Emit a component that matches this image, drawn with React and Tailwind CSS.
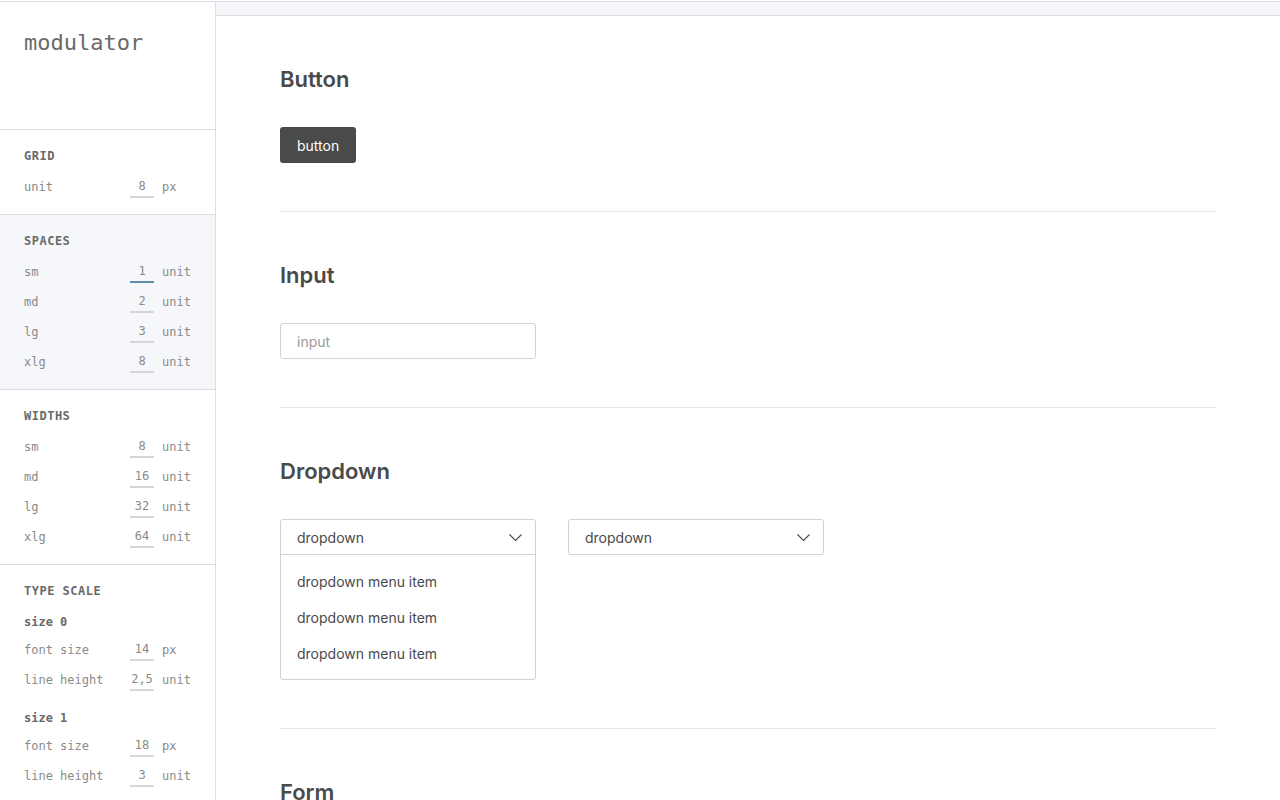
import React, { useState } from 'react';

const mono = { fontFamily: '"DejaVu Sans Mono", "Liberation Mono", monospace' };

const grid = [{ label: 'unit', value: '8', unit: 'px' }];

const spaces = [
  { label: 'sm', value: '1', unit: 'unit', active: true },
  { label: 'md', value: '2', unit: 'unit' },
  { label: 'lg', value: '3', unit: 'unit' },
  { label: 'xlg', value: '8', unit: 'unit' },
];

const widths = [
  { label: 'sm', value: '8', unit: 'unit' },
  { label: 'md', value: '16', unit: 'unit' },
  { label: 'lg', value: '32', unit: 'unit' },
  { label: 'xlg', value: '64', unit: 'unit' },
];

const typeScale = [
  {
    name: 'size 0',
    rows: [
      { label: 'font size', value: '14', unit: 'px' },
      { label: 'line height', value: '2,5', unit: 'unit' },
    ],
  },
  {
    name: 'size 1',
    rows: [
      { label: 'font size', value: '18', unit: 'px' },
      { label: 'line height', value: '3', unit: 'unit' },
    ],
  },
];

const Row = ({ label, value, unit, active }) => (
  <div className="h-[30px] flex items-center text-[12px] text-[#8a8a8a]">
    <span className="w-[106px]">{label}</span>
    <span
      className={`w-6 h-[22px] flex items-center justify-center border-b-2 ${
        active ? 'border-[#5a8ea6]' : 'border-[#d6d6d6]'
      }`}
    >
      {value}
    </span>
    <span className="ml-2">{unit}</span>
  </div>
);

const SideSection = ({ title, rows, shaded }) => (
  <div className={`px-6 pt-4 pb-3 border-b border-[#dcdde3] ${shaded ? 'bg-[#f6f7fb]' : ''}`}>
    <div className="h-5 flex items-center text-[12px] font-bold tracking-[0.5px] text-[#6a6a6a]">{title}</div>
    <div className="mt-[6px]">
      {rows.map((r, i) => (
        <Row key={i} {...r} />
      ))}
    </div>
  </div>
);

const Chevron = () => (
  <svg width="13" height="7" viewBox="0 0 13 7" fill="none">
    <polyline points="0.5,0.5 6.5,6.5 12.5,0.5" stroke="#4a4a4a" strokeWidth="1.1" />
  </svg>
);

const Section = ({ title, children, last }) => (
  <section className={`pt-[47px] pb-12 ${last ? '' : 'border-b border-[#e9e9e9]'}`}>
    <h2 className="text-[22px] leading-8 font-semibold text-[#4a4a4a]">{title}</h2>
    <div className="mt-8">{children}</div>
  </section>
);

export default function App() {
  const [value, setValue] = useState('');

  return (
    <div className="h-[800px] overflow-hidden bg-white pt-px" style={{ fontFamily: 'Inter, "Open Sans", sans-serif' }}>
      <div className="flex h-full border-t border-[#dcdde3]">
        {/* Sidebar */}
        <aside className="w-[216px] shrink-0 border-r border-[#dcdde3]" style={mono}>
          <div className="h-[128px] border-b border-[#dcdde3] px-6 pt-[27px]">
            <div className="text-[22px] leading-7 text-[#6a6a6a]">modulator</div>
          </div>
          <SideSection title="GRID" rows={grid} />
          <SideSection title="SPACES" rows={spaces} shaded />
          <SideSection title="WIDTHS" rows={widths} />
          <div className="px-6 pt-4">
            <div className="h-5 flex items-center text-[12px] font-bold tracking-[0.5px] text-[#6a6a6a]">TYPE SCALE</div>
            {typeScale.map((s, i) => (
              <div key={s.name} className={i === 0 ? 'mt-2' : 'mt-[10px]'}>
                <div className="h-[26px] flex items-center text-[12px] font-bold text-[#6a6a6a]">{s.name}</div>
                {s.rows.map((r, j) => (
                  <Row key={j} {...r} />
                ))}
              </div>
            ))}
          </div>
        </aside>

        {/* Main */}
        <main className="flex-1 min-w-0">
          <div className="h-[14px] bg-[#f5f6fa] border-b border-[#dcdde3]" />
          <div className="px-16">
            <Section title="Button">
              <button className="h-9 px-[17px] rounded-[3px] bg-[#4a4a4a] text-white text-[14px]">button</button>
            </Section>

            <Section title="Input">
              <input
                value={value}
                onChange={(e) => setValue(e.target.value)}
                placeholder="input"
                className="w-64 h-9 px-4 border border-[#d2d2d2] rounded-[3px] text-[14px] text-[#4a4a4a] placeholder-[#9a9a9a] outline-none"
              />
            </Section>

            <Section title="Dropdown">
              <div className="flex items-start gap-8">
                <div className="w-64 border border-[#d2d2d2] rounded-[3px] text-[14px] text-[#4a4a4a]">
                  <div className="h-[35px] pl-4 pr-[13px] flex items-center justify-between border-b border-[#d2d2d2]">
                    <span>dropdown</span>
                    <Chevron />
                  </div>
                  <div className="py-2">
                    {['dropdown menu item', 'dropdown menu item', 'dropdown menu item'].map((t, i) => (
                      <div key={i} className="h-9 px-4 flex items-center">
                        {t}
                      </div>
                    ))}
                  </div>
                </div>
                <div className="w-64 h-9 pl-4 pr-[13px] border border-[#d2d2d2] rounded-[3px] text-[14px] text-[#4a4a4a] flex items-center justify-between">
                  <span>dropdown</span>
                  <Chevron />
                </div>
              </div>
            </Section>

            <Section title="Form" last>
              <div className="h-40" />
            </Section>
          </div>
        </main>
      </div>
    </div>
  );
}
